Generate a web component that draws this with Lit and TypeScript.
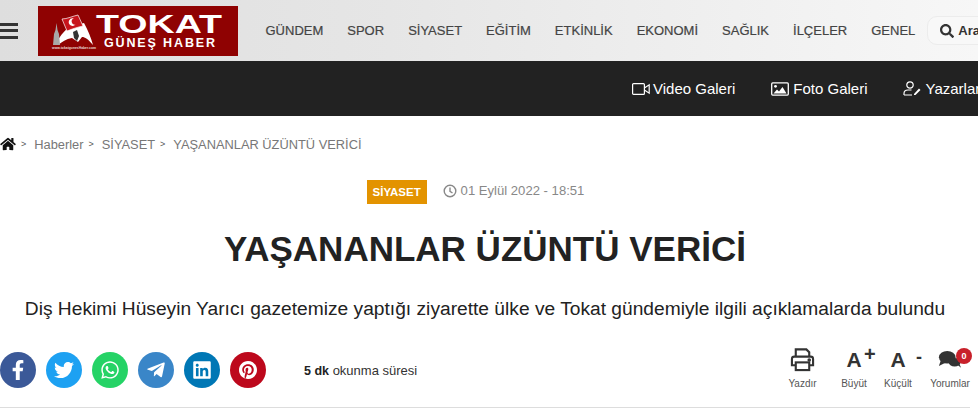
import { LitElement, html, css, svg } from "lit";
import { customElement } from "lit/decorators.js";

const nav = ["GÜNDEM", "SPOR", "SİYASET", "EĞİTİM", "ETKİNLİK", "EKONOMİ", "SAĞLIK", "İLÇELER", "GENEL"];

const social = [
  { cls: "fb", vb: "0 0 320 512", w: 20, d: "M279.14 288l14.22-92.66h-88.91v-60.13c0-25.35 12.42-50.06 52.24-50.06h40.42V6.26S260.43 0 225.36 0c-73.22 0-121.08 44.38-121.08 124.72v70.62H22.89V288h81.39v224h100.17V288z" },
  { cls: "tw", vb: "0 0 512 512", w: 20, d: "M459.37 151.716c.325 4.548.325 9.097.325 13.645 0 138.72-105.583 298.558-298.558 298.558-59.452 0-114.68-17.219-161.137-47.106 8.447.974 16.568 1.299 25.34 1.299 49.055 0 94.213-16.568 130.274-44.832-46.132-.975-84.792-31.188-98.112-72.772 6.498.974 12.995 1.624 19.818 1.624 9.421 0 18.843-1.3 27.614-3.573-48.081-9.747-84.143-51.98-84.143-102.985v-1.299c13.969 7.797 30.214 12.67 47.431 13.319-28.264-18.843-46.781-51.005-46.781-87.391 0-19.492 5.197-37.36 14.294-52.954 51.655 63.675 129.3 105.258 216.365 109.807-1.624-7.797-2.599-15.918-2.599-24.04 0-57.828 46.782-104.934 104.934-104.934 30.213 0 57.502 12.67 76.67 33.137 23.715-4.548 46.456-13.32 66.599-25.34-7.798 24.366-24.366 44.833-46.132 57.827 21.117-2.273 41.584-8.122 60.426-16.243-14.292 20.791-32.161 39.308-52.628 54.253z" },
  { cls: "wa", vb: "0 0 448 512", w: 18, d: "M380.9 97.1C339 55.1 283.2 32 223.9 32c-122.4 0-222 99.6-222 222 0 39.1 10.2 77.3 29.6 111L0 480l117.7-30.9c32.4 17.7 68.9 27 106.1 27h.1c122.3 0 224.1-99.6 224.1-222 0-59.3-25.2-115-67.1-157zm-157 341.6c-33.2 0-65.7-8.9-94-25.7l-6.7-4-69.8 18.3L72 359.2l-4.4-7c-18.5-29.4-28.2-63.3-28.2-98.2 0-101.7 82.8-184.5 184.6-184.5 49.3 0 95.6 19.2 130.4 54.1 34.8 34.9 56.2 81.2 56.1 130.5 0 101.8-84.9 184.6-186.6 184.6zm101.2-138.2c-5.5-2.8-32.8-16.2-37.9-18-5.1-1.9-8.8-2.8-12.5 2.8-3.7 5.6-14.3 18-17.6 21.8-3.2 3.7-6.5 4.2-12 1.4-32.6-16.3-54-29.1-75.5-66-5.7-9.8 5.7-9.1 16.3-30.3 1.8-3.7.9-6.9-.5-9.7-1.4-2.8-12.5-30.1-17.1-41.2-4.5-10.8-9.1-9.3-12.5-9.5-3.2-.2-6.9-.2-10.6-.2-3.7 0-9.7 1.4-14.8 6.9-5.1 5.6-19.4 19-19.4 46.3 0 27.3 19.9 53.7 22.6 57.4 2.8 3.7 39.1 59.7 94.8 83.8 35.2 15.2 49 16.5 66.6 13.9 10.7-1.6 32.8-13.4 37.4-26.4 4.6-13 4.6-24.1 3.2-26.4-1.3-2.5-5-3.9-10.5-6.6z" },
  { cls: "tg", vb: "0 0 448 512", w: 18, d: "M446.7 98.6l-67.6 318.8c-5.1 22.5-18.4 28.1-37.3 17.5l-103-75.9-49.7 47.8c-5.5 5.5-10.1 10.1-20.7 10.1l7.4-104.9 190.9-172.5c8.3-7.4-1.8-11.5-12.9-4.1L117.8 284 16.2 252.2c-22.1-6.9-22.5-22.1 4.6-32.7L418.2 66.4c18.4-6.9 34.5 4.1 28.5 32.2z" },
  { cls: "li", vb: "0 0 448 512", w: 18, d: "M416 32H31.9C14.3 32 0 46.5 0 64.3v383.4C0 465.5 14.3 480 31.9 480H416c17.6 0 32-14.5 32-32.3V64.3c0-17.8-14.4-32.3-32-32.3zM135.4 416H69V202.2h66.5V416zm-33.2-243c-21.3 0-38.5-17.3-38.5-38.5S80.9 96 102.2 96c21.2 0 38.5 17.3 38.5 38.5 0 21.3-17.2 38.5-38.5 38.5zm282.1 243h-66.4V312c0-24.8-.5-56.7-34.5-56.7-34.6 0-39.9 27-39.9 54.9V416h-66.4V202.2h63.7v29.2h.9c8.9-16.8 30.6-34.5 62.9-34.5 67.2 0 79.7 44.3 79.7 101.9V416z" },
  { cls: "pi", vb: "0 0 496 512", w: 18, d: "M496 256c0 137-111 248-248 248-25.6 0-50.2-3.9-73.4-11.1 10.1-16.5 25.2-43.5 30.8-65 3-11.6 15.4-59 15.4-59 8.1 15.4 31.7 28.5 56.8 28.5 74.8 0 128.7-68.8 128.7-154.3 0-81.9-66.9-143.2-152.9-143.2-107 0-163.9 71.8-163.9 150.1 0 36.4 19.4 81.7 50.3 96.1 4.7 2.2 7.2 1.2 8.3-3.3.8-3.4 5-20.3 6.9-28.1.6-2.5.3-4.7-1.7-7.1-10.1-12.5-18.3-35.3-18.3-56.6 0-54.7 41.4-107.6 112-107.6 60.9 0 103.6 41.5 103.6 100.9 0 67.1-33.9 113.6-78 113.6-24.3 0-42.6-20.1-36.7-44.8 7-29.5 20.5-61.3 20.5-82.6 0-19-10.2-34.9-31.4-34.9-24.9 0-44.9 25.7-44.9 60.2 0 22 7.4 36.8 7.4 36.8s-24.5 103.8-29 123.2c-5 21.4-3 51.6-.9 71.2C65.4 450.9 0 361.1 0 256 0 119 111 8 248 8s248 111 248 248z" },
];

const logo = svg`
  <svg class="logo" viewBox="0 0 200 50" width="200" height="50">
    <rect width="200" height="50" fill="#8f0202"/>
    <path d="M17 39 C21 31 26 25 31 21 L46 17 C50 24 53 32 55 39 C50 33 47 31 44 31 L40 36 L34 32 C28 33 24 36 20 39Z" fill="#fff"/>
    <path d="M24 13 C29 13 35 10 40 9 L45 20 C40 21 34 23 29 25Z" fill="#c8141c" stroke="#fff" stroke-width=".7"/>
    <path d="M36 12.500 A3.800 3.800 0 1 0 37.500 18.500 A3 3 0 1 1 36 12.500Z" fill="#fff"/>
    <path d="M35 26 L39 24 L41 30 L39 35 L36 32Z" fill="#333"/>
    <path d="M15 39 L16 28 L17.500 24 L18.500 17 L19.500 24 L21 28 L22 39Z" fill="#a8a8a8"/>
    <text x="14" y="43" font-family="Liberation Sans, sans-serif" font-size="3.600" font-weight="700" fill="#e8d8d8" textLength="44" lengthAdjust="spacingAndGlyphs">www.tokatgunesHaber.com</text>
    <text x="58" y="27" font-family="Liberation Sans, sans-serif" font-size="25" font-weight="700" fill="#fff" textLength="126" lengthAdjust="spacingAndGlyphs">TOKAT</text>
    <text x="66" y="41" font-family="Liberation Sans, sans-serif" font-size="12.500" font-weight="700" fill="#fff" textLength="111" lengthAdjust="spacing">GÜNEŞ HABER</text>
  </svg>`;

@customElement("app-root")
export class AppRoot extends LitElement {
  static styles = css`
    :host { display: block; width: 978px; height: 417px; overflow: hidden; background: #fff; font-family: "Liberation Sans", Arial, sans-serif; color: #222; }
    svg { display: block; flex: none; }
    .top { display: flex; align-items: center; height: 61px; background: linear-gradient(90deg, #dedede 0%, #e6e6e6 40%, #f7f7f7 100%); white-space: nowrap; overflow: hidden; }
    .burger { display: flex; flex-direction: column; gap: 3.500px; width: 18px; flex: none; }
    .burger i { display: block; height: 3px; background: #333; }
    .logo { margin-left: 20px; }
    nav { display: flex; gap: 24px; margin-left: 27.500px; font-size: 13px; color: #444; -webkit-text-stroke: .2px #444; }
    .search { display: flex; align-items: center; gap: 4px; flex: none; margin-left: 12px; width: 90px; height: 29px; padding-left: 12px; box-sizing: border-box; border: 1px solid #ececec; border-radius: 10px; background: #f8f8f8; font-size: 13px; font-weight: 700; color: #333; }
    .dark { display: flex; align-items: center; gap: 36px; height: 55px; padding-left: 632px; background: #222; color: #fff; font-size: 15px; white-space: nowrap; overflow: hidden; }
    .dark a { display: flex; align-items: center; gap: 3px; flex: none; }
    .dark a.wide { gap: 4px; }
    .crumb { display: flex; align-items: center; height: 56px; font-size: 12.850px; color: #777; gap: 5px; }
    .crumb b { font-weight: 400; font-size: 9px; color: #555; margin-right: 3px; }
    .meta { display: flex; justify-content: center; align-items: center; gap: 16px; width: 970px; height: 24px; margin-top: 8px; padding-right: 19px; box-sizing: border-box; font-size: 13.100px; color: #888; }
    .badge { display: flex; align-items: center; justify-content: center; width: 60px; height: 24px; background: #e39300; color: #fff; font-size: 11.500px; font-weight: 700; }
    .date { display: flex; align-items: center; gap: 4px; margin-bottom: 3px; }
    h1 { width: 970px; margin: 25px 0 0; text-align: center; font-size: 35px; line-height: 40px; font-weight: 700; color: #222; }
    h2 { width: 970px; margin: 28px 0 0; text-align: center; font-size: 19.200px; line-height: 24px; font-weight: 400; color: #222; white-space: nowrap; }
    .row { display: flex; align-items: center; width: 970px; height: 67px; padding-bottom: 7px; margin-top: 19px; box-sizing: border-box; }
    .share { display: flex; gap: 10px; }
    .share span { display: flex; align-items: center; justify-content: center; width: 36px; height: 36px; border-radius: 50%; }
    .share svg { fill: #fff; }
    .fb { background: #3b5998; } .tw { background: #1da1f2; } .wa { background: #25d366; } .tg { background: #3a86c8; } .li { background: #0077b5; } .pi { background: #bd081c; }
    .read { margin-left: 38px; font-size: 13px; color: #333; }
    .read strong { font-size: 12.500px; font-weight: 700; color: #222; }
    .tools { display: flex; margin-left: auto; margin-bottom: 5px; align-items: flex-start; color: #333; }
    .tool { display: flex; flex-direction: column; align-items: center; position: relative; font-size: 10px; color: #555; white-space: nowrap; }
    .tool .ic { display: flex; align-items: center; justify-content: center; height: 27px; margin-bottom: 5px; }
    .t-print { width: 45px; margin-right: 7px; }
    .t-big { width: 44px; }
    .t-small { width: 44px; margin-right: 10px; }
    .t-com { width: 40px; }
    .big { font-size: 21px; font-weight: 700; color: #333; }
    .sup { font-size: 20px; line-height: 16px; font-weight: 700; color: #333; position: absolute; top: 0; left: 32px; }
    .minus { font-size: 18px; left: 40px; top: 3px; }
    .count { position: absolute; top: 2px; left: 26px; width: 16px; height: 16px; border-radius: 50%; background: #c8202a; color: #fff; font-size: 9px; font-weight: 700; line-height: 16px; text-align: center; }
    .rule { width: 970px; height: 1px; background: #ddd; }
  `;

  render() {
    return html`
      <div class="top">
        <div class="burger"><i></i><i></i><i></i></div>
        ${logo}
        <nav>${nav.map((n) => html`<span>${n}</span>`)}</nav>
        <div class="search">
          <svg viewBox="0 0 512 512" width="14" height="14" fill="#333"><path d="M505 442.700L405.300 343c-4.500-4.500-10.600-7-17-7H372c27.600-35.300 44-79.700 44-128C416 93.100 322.900 0 208 0S0 93.100 0 208s93.100 208 208 208c48.300 0 92.700-16.400 128-44v16.300c0 6.400 2.500 12.500 7 17l99.700 99.700c9.400 9.400 24.600 9.400 33.900 0l28.300-28.300c9.400-9.400 9.400-24.600.1-34zM208 336c-70.700 0-128-57.200-128-128 0-70.700 57.200-128 128-128 70.700 0 128 57.200 128 128 0 70.700-57.200 128-128 128z"/></svg>
          Ara
        </div>
      </div>
      <div class="dark">
        <a><svg viewBox="0 0 18 14" width="18" height="14" fill="none" stroke="#fff" stroke-width="1.200"><rect x=".6" y="1.600" width="11.800" height="10.800" rx="1"/><path d="M12.400 6 L17.200 2.800 V11.200 L12.400 8"/></svg>Video Galeri</a>
        <a class="wide"><svg viewBox="0 0 18 14" width="18" height="14" fill="none" stroke="#fff" stroke-width="1.300"><rect x=".7" y=".9" width="16.600" height="12.200" rx="1"/><circle cx="4.500" cy="4.300" r="1.400" fill="#fff" stroke="none"/><path d="M2.500 11.500 L6 7.500 L8 9.500 L11.500 5 L15.500 11.500Z" fill="#fff" stroke="none"/></svg>Foto Galeri</a>
        <a class="wide"><svg viewBox="0 0 18 15" width="18" height="15" fill="none" stroke="#fff" stroke-width="1.200"><circle cx="7" cy="4" r="3.200"/><path d="M1 14 V12.500 C1 10 3 9 5 9 H8.500 M1 14 H9"/><path d="M11 13 L16 7.500 L17.500 9 L12.500 14 H11Z" fill="#fff" stroke="none"/></svg>Yazarlar</a>
      </div>
      <div class="crumb">
        <svg viewBox="0 0 576 512" width="16" height="14" fill="#111"><path d="M280.370 148.260L96 300.110V464a16 16 0 0 0 16 16l112.060-.29a16 16 0 0 0 15.920-16V368a16 16 0 0 1 16-16h64a16 16 0 0 1 16 16v95.640a16 16 0 0 0 16 16.050L464 480a16 16 0 0 0 16-16V300L295.670 148.260a12.190 12.190 0 0 0-15.300 0zM571.600 251.470L488 182.560V44.050a12 12 0 0 0-12-12h-56a12 12 0 0 0-12 12v72.610L318.470 43a48 48 0 0 0-61 0L4.340 251.470a12 12 0 0 0-1.600 16.900l25.500 31A12 12 0 0 0 45.150 301l235.220-193.740a12.190 12.190 0 0 1 15.300 0L530.900 301a12 12 0 0 0 16.900-1.600l25.500-31a12 12 0 0 0-1.700-16.930z"/></svg>
        <b>&gt;</b><span>Haberler</span><b>&gt;</b><span>SİYASET</span><b>&gt;</b><span>YAŞANANLAR ÜZÜNTÜ VERİCİ</span>
      </div>
      <div class="meta">
        <span class="badge">SİYASET</span>
        <span class="date"><svg viewBox="0 0 14 14" width="14" height="14" fill="none" stroke="#888" stroke-width="1.400"><circle cx="7" cy="7" r="5.800"/><path d="M7 3.500V7.300L9.500 9"/></svg>01 Eylül 2022 - 18:51</span>
      </div>
      <h1>YAŞANANLAR ÜZÜNTÜ VERİCİ</h1>
      <h2>Diş Hekimi Hüseyin Yarıcı gazetemize yaptığı ziyarette ülke ve Tokat gündemiyle ilgili açıklamalarda bulundu</h2>
      <div class="row">
        <div class="share">
          ${social.map((s) => html`<span class=${s.cls}><svg viewBox=${s.vb} width=${s.w} height="20"><path d=${s.d}/></svg></span>`)}
        </div>
        <div class="read"><strong>5 dk</strong> okunma süresi</div>
        <div class="tools">
          <div class="tool t-print"><div class="ic"><svg viewBox="0 0 26 26" width="25" height="25" fill="none" stroke="#333" stroke-width="2.200"><path d="M6 10V2.500H17L20 5.500V10"/><path d="M6 19H2V12.500C2 11 3 10 4.500 10H21.500C23 10 24 11 24 12.500V19H20"/><rect x="6" y="16" width="14" height="8"/><circle cx="20" cy="13.500" r=".8" fill="#333"/></svg></div>Yazdır</div>
          <div class="tool t-big"><div class="ic big">A</div><span class="sup">+</span>Büyüt</div>
          <div class="tool t-small"><div class="ic big">A</div><span class="sup minus">-</span>Küçült</div>
          <div class="tool t-com"><div class="ic"><svg viewBox="0 0 26 20" width="24" height="19" fill="#333"><ellipse cx="10" cy="7.500" rx="9" ry="6.800"/><path d="M3 11 L1 17 L9 13Z"/><ellipse cx="18" cy="13" rx="6.500" ry="4.500"/><path d="M20 15 L25 19 L22 12Z"/></svg></div><span class="count">0</span>Yorumlar</div>
        </div>
      </div>
      <div class="rule"></div>
    `;
  }
}
